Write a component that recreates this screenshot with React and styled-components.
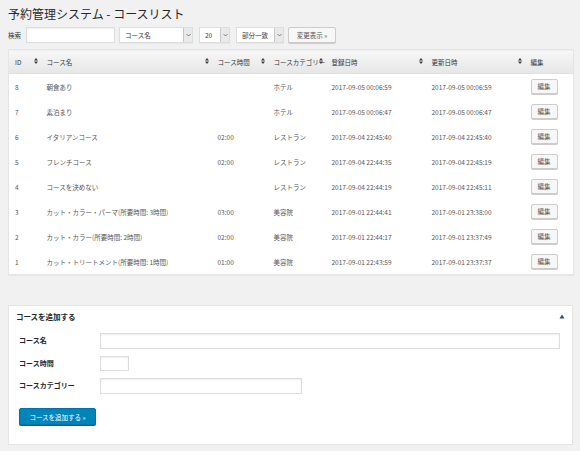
import React from 'react';
import styled, { createGlobalStyle } from 'styled-components';

const GlobalStyle = createGlobalStyle`
    html, body {
        margin: 0;
        padding: 0;
        background: #f1f1f1;
    }

    body {
        font-family: "Noto Sans CJK JP", "Noto Sans", sans-serif;
        color: #444;
        -webkit-font-smoothing: antialiased;
    }
`;

const Page = styled.div`
    width: 565px;
    padding: 6px 7px 0 8px;
    display: flex;
    flex-direction: column;
`;

const Title = styled.h1`
    margin: 0 0 5px;
    height: 16px;
    font-size: 12px;
    line-height: 16px;
    font-weight: 400;
    color: #23282d;
    white-space: nowrap;
`;

const SearchBar = styled.div`
    display: flex;
    align-items: center;
    height: 16px;
    margin-bottom: 6px;

    label {
        font-size: 6.5px;
        color: #333;
        margin-right: 5px;
    }
`;

const TextInput = styled.input`
    box-sizing: border-box;
    width: ${p => p.w}px;
    height: ${p => p.h || 16}px;
    margin: 0;
    padding: 0 3px;
    border: 1px solid #ddd;
    background: #fff;
    box-shadow: inset 0 1px 2px rgba(0, 0, 0, 0.07);
    font-family: inherit;
    font-size: 6.5px;
    outline: none;
`;

const SelectBox = styled.div`
    box-sizing: border-box;
    display: flex;
    align-items: stretch;
    width: ${p => p.w}px;
    height: 16px;
    margin-left: ${p => p.gap}px;
    border: 1px solid #ddd;
    background: #fff;
    box-shadow: 0 1px 1px rgba(0, 0, 0, 0.04);

    span.value {
        flex: 1;
        padding-left: 5px;
        font-size: 6.5px;
        line-height: 14px;
        color: #32373c;
        white-space: nowrap;
        overflow: hidden;
    }

    span.arrow {
        width: 8px;
        display: flex;
        align-items: center;
        justify-content: center;
        background: #e9e9e9;
        border-left: 1px solid #c8c8c8;
    }
`;

const SmallButton = styled.button`
    box-sizing: border-box;
    height: ${p => p.h || 16}px;
    width: ${p => p.w}px;
    margin: 0 0 0 ${p => p.gap || 0}px;
    padding: 0;
    border: 1px solid #ccc;
    border-radius: 2px;
    background: #f7f7f7;
    box-shadow: 0 1px 0 #ccc;
    color: #555;
    font-family: inherit;
    font-size: 6.5px;
    line-height: 1;
    white-space: nowrap;
`;

const ListTable = styled.table`
    width: 565px;
    table-layout: fixed;
    border-collapse: collapse;
    background: #fff;
    border: 1px solid #e5e5e5;
    box-shadow: 0 1px 1px rgba(0, 0, 0, 0.04);

    th {
        position: relative;
        height: 23px;
        padding: 0 0 0 6px;
        text-align: left;
        font-weight: 400;
        font-size: 6.5px;
        color: #32373c;
        white-space: nowrap;
        background: linear-gradient(#f7f7f7, #e6e6e6);
        border-bottom: 1px solid #e1e1e1;
    }

    td {
        height: 25px;
        padding: 0 0 0 6px;
        font-size: 6.5px;
        color: #555;
        white-space: nowrap;
        overflow: visible;
    }
`;

const SortMark = styled.span`
    position: absolute;
    right: 3px;
    top: 8px;
    display: flex;
    flex-direction: column;
`;

const Postbox = styled.section`
    box-sizing: border-box;
    width: 565px;
    margin-top: 30px;
    background: #fff;
    border: 1px solid #e5e5e5;
    box-shadow: 0 1px 1px rgba(0, 0, 0, 0.04);
    padding-bottom: 19px;
`;

const PostboxHeader = styled.div`
    height: 20px;
    display: flex;
    align-items: center;
    justify-content: space-between;
    padding: 0 7px 0 7px;

    h2 {
        margin: 0;
        font-size: 7.5px;
        font-weight: 700;
        color: #23282d;
    }
`;

const FormGrid = styled.div`
    display: grid;
    grid-template-columns: 81px 1fr;
    row-gap: 7px;
    align-items: center;
    padding: 7px 0 0 10px;

    label {
        font-size: 7px;
        font-weight: 700;
        color: #23282d;
        white-space: nowrap;
        align-self: start;
        line-height: 14px;
    }
`;

const PrimaryButton = styled.button`
    box-sizing: border-box;
    margin: 14px 0 0 10px;
    width: 77px;
    height: 17px;
    padding: 0;
    border: 1px solid #0073aa;
    border-radius: 2px;
    background: #0085ba;
    box-shadow: 0 1px 0 #006799;
    color: #fff;
    font-family: inherit;
    font-size: 6.5px;
    white-space: nowrap;
`;

const Chevron = () => (
    <svg width="5" height="4" viewBox="0 0 5 4">
        <path d="M0.5 1 L2.5 3 L4.5 1" fill="none" stroke="#666" strokeWidth="0.8" />
    </svg>
);

const Sorter = () => (
    <SortMark>
        <svg width="4" height="6" viewBox="0 0 4 6">
            <path d="M2 0 L4 2.6 L0 2.6 Z M0 3.4 L4 3.4 L2 6 Z" fill="#3c3c3c" />
        </svg>
    </SortMark>
);

const Select = ({ value, w, gap }) => (
    <SelectBox w={w} gap={gap}>
        <span className="value">{value}</span>
        <span className="arrow"><Chevron /></span>
    </SelectBox>
);

const columns = [
    { label: 'ID', width: 32 },
    { label: 'コース名', width: 171 },
    { label: 'コース時間', width: 56 },
    { label: 'コースカテゴリー', width: 58 },
    { label: '登録日時', width: 100 },
    { label: '更新日時', width: 99 },
    { label: '編集', width: 49, noSort: true },
];

const courses = [
    [8, '朝食あり', '', 'ホテル', '2017-09-05 00:06:59', '2017-09-05 00:06:59'],
    [7, '素泊まり', '', 'ホテル', '2017-09-05 00:06:47', '2017-09-05 00:06:47'],
    [6, 'イタリアンコース', '02:00', 'レストラン', '2017-09-04 22:45:40', '2017-09-04 22:45:40'],
    [5, 'フレンチコース', '02:00', 'レストラン', '2017-09-04 22:44:35', '2017-09-04 22:45:19'],
    [4, 'コースを決めない', '', 'レストラン', '2017-09-04 22:44:19', '2017-09-04 22:45:11'],
    [3, 'カット・カラー・パーマ(所要時間: 3時間)', '03:00', '美容院', '2017-09-01 22:44:41', '2017-09-01 23:38:00'],
    [2, 'カット・カラー(所要時間: 2時間)', '02:00', '美容院', '2017-09-01 22:44:17', '2017-09-01 23:37:49'],
    [1, 'カット・トリートメント(所要時間: 1時間)', '01:00', '美容院', '2017-09-01 22:43:59', '2017-09-01 23:37:37'],
];

const App = () => (
    <>
        <GlobalStyle />
        <Page>
            <Title>予約管理システム - コースリスト</Title>

            <SearchBar>
                <label>検索</label>
                <TextInput w={89} />
                <Select value="コース名" w={74} gap={4} />
                <Select value="20" w={31} gap={6} />
                <Select value="部分一致" w={48} gap={6} />
                <SmallButton w={48} gap={4}>変更表示 »</SmallButton>
            </SearchBar>

            <ListTable>
                <colgroup>
                    {columns.map(c => <col key={c.label} style={{ width: c.width }} />)}
                </colgroup>
                <thead>
                    <tr>
                        {columns.map(c => (
                            <th key={c.label}>
                                {c.label}
                                {!c.noSort && <Sorter />}
                            </th>
                        ))}
                    </tr>
                </thead>
                <tbody>
                    {courses.map(row => (
                        <tr key={row[0]}>
                            {row.map((cell, i) => <td key={i}>{cell}</td>)}
                            <td><SmallButton w={27} h={15}>編集</SmallButton></td>
                        </tr>
                    ))}
                </tbody>
            </ListTable>

            <Postbox>
                <PostboxHeader>
                    <h2>コースを追加する</h2>
                    <svg width="6" height="5" viewBox="0 0 6 5">
                        <path d="M3 0.5 L5.5 4.5 L0.5 4.5 Z" fill="#3a4a5a" />
                    </svg>
                </PostboxHeader>
                <FormGrid>
                    <label>コース名</label>
                    <TextInput w={460} />
                    <label>コース時間</label>
                    <TextInput w={29} h={15} />
                    <label>コースカテゴリー</label>
                    <TextInput w={202} />
                </FormGrid>
                <PrimaryButton>コースを追加する »</PrimaryButton>
            </Postbox>
        </Page>
    </>
);

export default App;
